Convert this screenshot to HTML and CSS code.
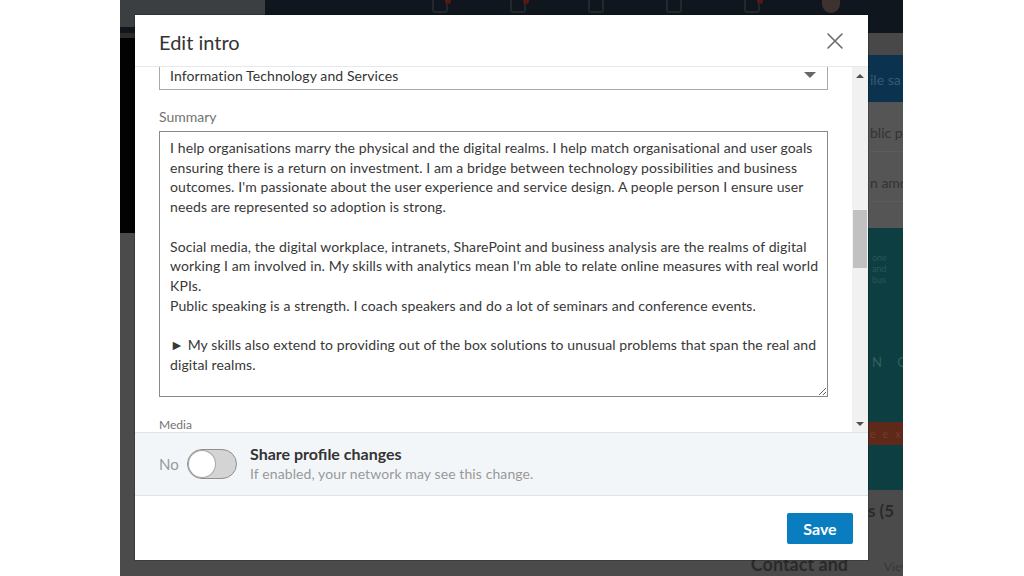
FILE: index.html
```html
<!DOCTYPE html>
<html lang="en">
<head>
<meta charset="utf-8">
<title>Edit intro</title>
<link rel="stylesheet" href="styles.css">
</head>
<body>
<div class="stage">
  <div class="screen">
    <div class="nav">
      <div class="nav-search"></div>
      <div class="nav-icons">
        <span class="nav-icon"><i class="dot"></i></span>
        <span class="nav-icon"><i class="dot"></i></span>
        <span class="nav-icon"></span>
        <span class="nav-icon"></span>
        <span class="nav-icon"><i class="dot"></i></span>
        <span class="nav-icon avatar"></span>
      </div>
    </div>
    <div class="page">
      <div class="page-left">
        <div class="left-dark"></div>
        <div class="left-black"></div>
      </div>
      <div class="page-main">
        <div class="main-foot"><span class="contact">Contact and</span></div>
      </div>
      <div class="page-right">
        <div class="r-gray-top"></div>
        <div class="r-blue"><span>ile sa</span></div>
        <div class="r-gray">
          <span class="r-line">blic p</span>
          <span class="r-line">n amo</span>
        </div>
        <div class="r-teal">
          <span class="r-small">one<br>and<br>bus</span>
          <span class="r-spaced">N C</span>
        </div>
        <div class="r-red"><span>e e x</span></div>
        <div class="r-teal2"></div>
        <div class="r-foot">
          <span class="r-bold">s (5</span>
          <span class="r-views">Views</span>
        </div>
      </div>
    </div>

    <div class="modal" role="dialog" aria-labelledby="modal-title">
      <div class="modal-header">
        <h2 class="modal-title" id="modal-title">Edit intro</h2>
        <button class="close" aria-label="Dismiss">
          <svg width="16" height="16" viewBox="0 0 16 16"><path d="M1 1 L15 15 M15 1 L1 15" stroke="#6b6b6b" stroke-width="1.6" fill="none" stroke-linecap="round"/></svg>
        </button>
      </div>
      <div class="modal-body">
        <div class="body-content">
          <div class="select">
            <span class="select-text">Information Technology and Services</span>
            <span class="select-caret"></span>
          </div>
          <label class="field-label" for="summary">Summary</label>
          <textarea id="summary" class="summary" wrap="off">I help organisations marry the physical and the digital realms. I help match organisational and user goals
ensuring there is a return on investment. I am a bridge between technology possibilities and business
outcomes. I'm passionate about the user experience and service design. A people person I ensure user
needs are represented so adoption is strong.

Social media, the digital workplace, intranets, SharePoint and business analysis are the realms of digital
working I am involved in. My skills with analytics mean I'm able to relate online measures with real world
KPIs.
Public speaking is a strength. I coach speakers and do a lot of seminars and conference events.

► My skills also extend to providing out of the box solutions to unusual problems that span the real and
digital realms.</textarea>
          <div class="media-label">Media</div>
        </div>
        <div class="scrollbar">
          <div class="sb-btn"><span class="sb-up"></span></div>
          <div class="sb-thumb"></div>
          <div class="sb-btn sb-bottom"><span class="sb-down"></span></div>
        </div>
      </div>
      <div class="share">
        <span class="share-no">No</span>
        <span class="toggle"><span class="knob"></span></span>
        <div class="share-text">
          <div class="share-title">Share profile changes</div>
          <div class="share-sub">If enabled, your network may see this change.</div>
        </div>
      </div>
      <div class="modal-footer">
        <button class="save">Save</button>
      </div>
    </div>
  </div>
</div>
</body>
</html>
```
FILE: styles.css
```css
* { box-sizing: border-box; margin: 0; padding: 0; }
html, body { width: 1024px; height: 576px; overflow: hidden; background: #fff; }
body { font-family: Lato, "Open Sans", sans-serif; color: #333; }

.stage { display: flex; padding-left: 120px; height: 576px; }
.screen {
  position: relative; width: 783px; height: 576px; background: #4b4b4b;
  display: flex; flex-direction: column; overflow: hidden;
}

/* dimmed page behind the dialog */
.nav { height: 33px; flex: none; background: #10161d; display: flex; align-items: flex-start; }
.nav-search { width: 145px; height: 27px; background: #3c3f42; }
.nav-icons { display: flex; gap: 62px; margin-left: 167px; }
.nav-icon {
  position: relative; width: 16px; height: 13px; border: 2px solid #22282e; border-top: none;
  border-radius: 0 0 3px 3px;
}
.nav-icon .dot { position: absolute; right: -5px; top: 0; width: 6px; height: 4px; background: #5a1515; border-radius: 0 0 3px 3px; }
.nav-icon.avatar { width: 18px; border: none; background: #3e3230; border-radius: 0 0 9px 9px; }

.page { flex: 1; display: grid; grid-template-columns: 15px 1fr 35px; }
.page-left { display: flex; flex-direction: column; }
.left-dark { height: 5px; background: #2b2b2b; }
.left-black { height: 195px; background: #020202; }
.page-main { display: flex; flex-direction: column; justify-content: flex-end; }
.main-foot { height: 20px; display: flex; justify-content: flex-end; padding-right: 20px; }
.contact { font-size: 18px; font-weight: 700; color: #2a2a2a; line-height: 22px; margin-top: -3px; }

.page-right { display: flex; flex-direction: column; font-size: 14px; overflow: hidden; white-space: nowrap; }
.r-gray-top { height: 22px; background: #484848; }
.r-blue { height: 47px; background: #0b3350; color: #355a73; padding: 16px 0 0 2px; }
.r-gray { height: 126px; background: #555; color: #333; display: flex; flex-direction: column; padding: 22px 0 0 2px; gap: 22px; }
.r-line { border-bottom: 1px solid #5c5c5c; padding-bottom: 10px; }
.r-teal { height: 194px; background: #0d3e42; color: #2a5659; display: flex; flex-direction: column; padding: 24px 0 0 4px; font-size: 9px; line-height: 11px; }
.r-spaced { margin-top: 72px; font-size: 13px; letter-spacing: 6px; color: #35605f; }
.r-red { height: 23px; background: #5e2919; color: #74392a; font-size: 11px; padding: 5px 0 0 2px; letter-spacing: 2px; }
.r-teal2 { height: 45px; background: #0d3e42; }
.r-foot { flex: 1; background: #4b4b4b; display: flex; flex-direction: column; padding: 10px 0 0 0; }
.r-bold { font-weight: 700; font-size: 17px; color: #2a2a2a; }
.r-views { margin-top: 38px; margin-left: 16px; font-size: 12px; color: #363636; }

/* dialog */
.modal {
  position: absolute; left: 15px; top: 15px; width: 733px; height: 545px;
  background: #fff; display: flex; flex-direction: column;
  box-shadow: 0 0 0 1px rgba(0,0,0,.2);
}
.modal-header {
  height: 52px; flex: none; display: flex; align-items: center; justify-content: space-between;
  padding: 0 21px 0 24px; border-bottom: 1px solid #e6e9ec;
}
.modal-title { font-size: 20px; font-weight: 400; color: #333; margin-top: 2px; }
.close { width: 24px; height: 24px; border: none; background: none; display: flex; align-items: center; justify-content: center; }

.modal-body { height: 365px; flex: none; display: flex; }
.body-content { flex: 1; overflow: hidden; padding: 0 24px; }

.select {
  height: 30px; margin-top: -7px; border: 1px solid #a9a9a9; display: flex; align-items: center;
  justify-content: space-between; padding: 0 11px 0 10px;
}
.select-text { font-size: 14px; color: #333; letter-spacing: 0.1px; }
.select-caret { width: 0; height: 0; border-left: 6px solid transparent; border-right: 6px solid transparent; border-top: 6px solid #666; }

.field-label { display: block; font-size: 14px; line-height: 20px; color: #737373; margin-top: 17px; }
.summary {
  display: block; width: 100%; height: 266px; margin-top: 4px;
  border: 1px solid #8a8a8a; border-radius: 0; padding: 6px 10px;
  font-family: inherit; font-size: 14px; line-height: 19.7px; color: #383838; letter-spacing: 0.11px;
  overflow: hidden; resize: vertical; white-space: pre; background: #fff;
}
.media-label { font-size: 12px; line-height: 14px; color: #737373; margin-top: 21px; }

.scrollbar { width: 16px; flex: none; background: #f1f1f1; display: flex; flex-direction: column; align-items: center; }
.sb-btn { height: 17px; width: 16px; display: flex; align-items: center; justify-content: center; flex: none; }
.sb-bottom { margin-top: auto; }
.sb-up { width: 0; height: 0; border-left: 4px solid transparent; border-right: 4px solid transparent; border-bottom: 4px solid #505050; }
.sb-down { width: 0; height: 0; border-left: 4px solid transparent; border-right: 4px solid transparent; border-top: 4px solid #505050; }
.sb-thumb { width: 14px; height: 58px; background: #c1c1c1; margin-top: 126px; }

.share {
  height: 64px; flex: none; background: #f3f6f8; border-top: 1px solid #dfe3e6; border-bottom: 1px solid #dfe3e6;
  display: flex; align-items: center; padding-left: 24px;
}
.share-no { font-size: 15px; color: #999; width: 28px; }
.toggle {
  width: 50px; height: 30px; border-radius: 15px; background: #d4d4d4; border: 1.5px solid #8f8f8f;
  display: flex; align-items: center; padding: 0 1px; margin-right: 13px;
}
.knob { width: 26px; height: 26px; border-radius: 50%; background: #fff; box-shadow: 0 0 0 1px #a8a8a8; }
.share-title { font-size: 16px; font-weight: 700; line-height: 20px; color: #333; }
.share-sub { font-size: 14px; line-height: 20px; color: #999; letter-spacing: 0.1px; }

.modal-footer { flex: 1; display: flex; justify-content: flex-end; align-items: center; padding-right: 15px; }
.save {
  width: 66px; height: 31px; border: none; border-radius: 2px; background: #0a7dc0;
  color: #fff; font-family: inherit; font-size: 16px; font-weight: 700;
}
```
